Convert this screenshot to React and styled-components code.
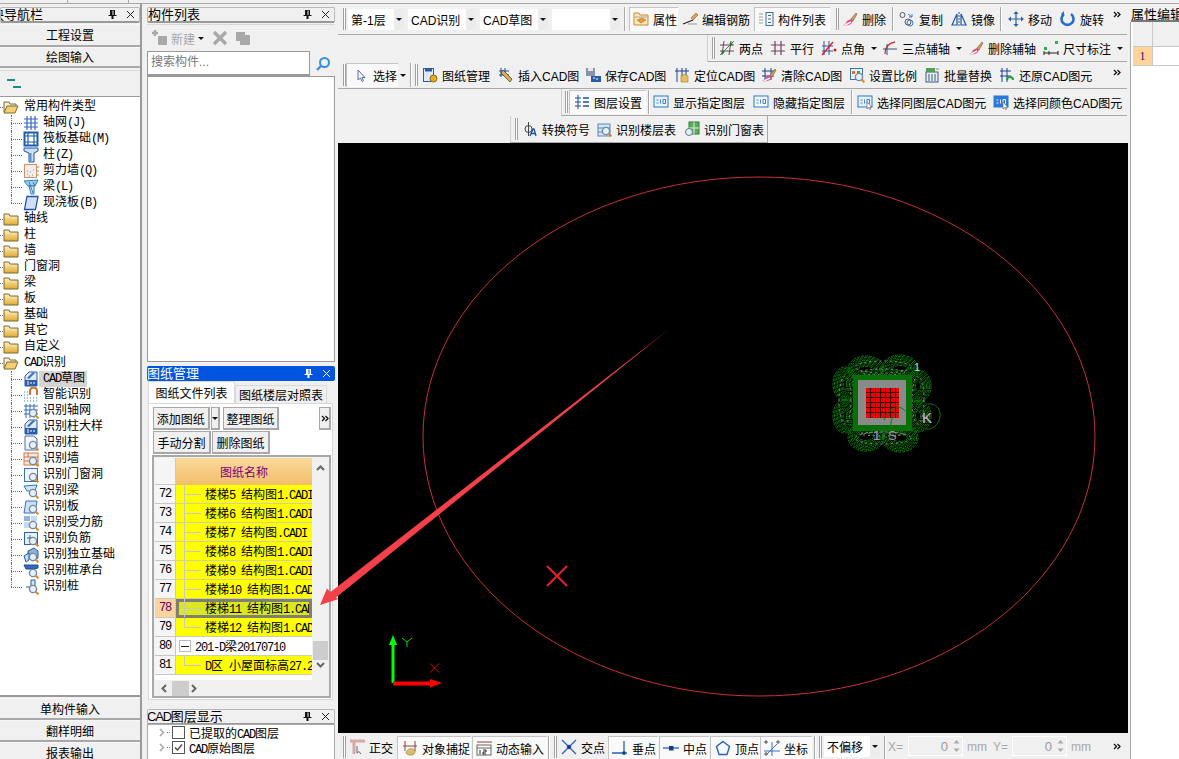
import React from "react";
import styled, { createGlobalStyle } from "styled-components";

const SANS = '"Liberation Sans", "Noto Sans CJK SC", sans-serif';
const MONO = '"Liberation Mono", "Noto Sans CJK SC", monospace';

const GlobalStyle = createGlobalStyle`
  html, body { margin: 0; padding: 0; overflow: hidden; background: #f0f0f0; }
  * { box-sizing: border-box; }
`;

const lens = (
  <g>
    <circle cx="10" cy="10" r="3.6" fill="#e4f2ff" stroke="#76899c" strokeWidth="1.4" />
    <path d="M12.8 12.8l2.6 2.6" stroke="#d88a2a" strokeWidth="2" />
  </g>
);
const cadDoc = (
  <g>
    <path d="M2 5l4-4h8v14H2z" fill="#dfeaf8" stroke="#2a5caa" />
    <path d="M4 7l6-6 2 1-6 6z" fill="#3a70c0" />
    <rect x="2" y="9" width="12" height="6" fill="#2a5caa" />
    <path d="M4 11h2M4 13h2M8 11v2M11 11v2" stroke="#fff" />
  </g>
);
const brush = (
  <g>
    <path d="M9 8l5-6 1 1-4 7z" fill="#c9a060" stroke="#7a5a20" strokeWidth=".6" />
    <path d="M1 14c2 0 3-2 4-4l4-2 2 2-2 3c-2 1-5 2-8 1z" fill="#d94a80" />
    <path d="M3 14l6-3" stroke="#f5f5f5" strokeWidth="1.4" />
  </g>
);
const cadLabel = (fill, text) => (
  <g>
    <rect x="1" y="2" width="14" height="11" fill={fill} stroke="#2a78c8" />
    <path d="M3.5 6h2M3.5 9h2M7.5 5.5v4M10 5.5h2.5v4H10z" stroke={text} fill="none" strokeWidth=".9" />
  </g>
);
const cursor = <path d="M10 8v7l1.6-1.4 1 2 1-.5-1-2H14.800z" fill="#fff" stroke="#666" strokeWidth=".7" />;

const glyphs = {
  folder: (
    <g>
      <path d="M1 3h5l1 2h8v9H1z" fill="url(#fold)" stroke="#7a6a30" />
    </g>
  ),
  folderOpen: (
    <g>
      <path d="M1 13V3h5l1 2h6v2" fill="#f5f0d8" stroke="#7a6a30" />
      <path d="M1 14l3-7h11l-3 7z" fill="#f6cf72" stroke="#7a6a30" />
    </g>
  ),
  grid: <path d="M4 1v14M8 1v14M12 1v14M1 4h14M1 8h14M1 12h14" stroke="#3568c0" strokeWidth="1.2" fill="none" />,
  raft: (
    <g fill="none" stroke="#1c5fa8">
      <rect x="1.500" y="1.500" width="13" height="13" strokeWidth="2" />
      <path d="M5 2v12M11 2v12M2 5h12M2 11h12" strokeWidth="1.2" />
    </g>
  ),
  column: (
    <g>
      <path d="M1 1h14v3l-4 2v9H6V6L1 4z" fill="#cfe0f5" stroke="#1f55a8" />
      <path d="M6.500 6h2v8h-2z" fill="#5a8ed0" />
    </g>
  ),
  wall: (
    <g>
      <rect x="1.500" y="1.500" width="12" height="13" fill="#f4eeea" stroke="#d09070" />
      <path d="M4 11h1M7 9h1M9 12h1M6 13h1M10 7h1M4 8h1" stroke="#888" strokeWidth="1.200" />
      <path d="M14 4h2M14 8h2M14 12h2" stroke="#e07020" />
    </g>
  ),
  beam: (
    <g>
      <path d="M1 2l14-1-3 6H5z" fill="#9fd0ee" stroke="#2b7ac0" />
      <path d="M6 7h5v8H8z" fill="#d5e9f7" stroke="#2b7ac0" />
      <path d="M6 3l4 11M10 3l2 4" stroke="#2b7ac0" />
    </g>
  ),
  slab: <path d="M4 1.500h11L12.500 14.500H1.500z" fill="#cfe0f8" stroke="#1f55b0" strokeWidth="1.300" />,
  cad: cadDoc,
  magnet: (
    <g>
      <path d="M7 8V4a3.500 3.500 0 0 1 7 0v4" fill="none" stroke="#d07030" strokeWidth="2" />
      <path d="M1 5h1M4 5h1M1 8h1M4 8h1M1 11h1M4 11h1M7 11h1M10 11h1M13 11h1M1 14h1M4 14h1M7 14h1M10 14h1M13 14h1" stroke="#3a78c8" />
    </g>
  ),
  rGrid: <g><path d="M3 1v14M7 1v14M11 1v14M1 3h14M1 7h14M1 11h14" stroke="#3568c0" fill="none" />{lens}</g>,
  rCad: cadDoc,
  rCol: <g><path d="M2 1h9l3 3v11H2z" fill="#f2f6fc" stroke="#4a6fb0" />{lens}</g>,
  rWall: <g><rect x="1" y="2" width="14" height="12" fill="#f6e8dc" stroke="#d07a50" /><path d="M1 6h14M1 10h14M5 2v4M10 6v4" stroke="#d07a50" />{lens}</g>,
  rDoor: <g><rect x="1.500" y="1.500" width="13" height="13" fill="#f2f6fc" stroke="#3a70c0" />{lens}</g>,
  rBeam: <g><path d="M1 3l13-1-2 6H4z" fill="#cfe5f7" stroke="#2b7ac0" />{lens}</g>,
  rSlab: <g><path d="M3 2h11l-2 12H1z" fill="#cfe0f8" stroke="#3a70c0" />{lens}</g>,
  rBar: <g><rect x="1" y="1" width="6" height="5" fill="#8fb4dd" /><rect x="8" y="1" width="6" height="5" fill="#c7d9ee" /><rect x="1" y="7" width="6" height="6" fill="#c7d9ee" />{lens}</g>,
  rNeg: <g><rect x="1.500" y="1.500" width="13" height="12" fill="#e9f1fb" stroke="#2a60b0" /><path d="M4 7h7M7 4v7" stroke="#2a60b0" />{lens}</g>,
  rFound: <g><path d="M5 4l6-3 4 3v7l-5 3-5-3z" fill="#8fb0dc" stroke="#2a5caa" /><path d="M1 9l5-3v7l-3 2z" fill="#c5d8f0" stroke="#2a5caa" />{lens}</g>,
  rCap: <g><path d="M1 2h14v3l-4 1H3z" fill="#2f6cbc" stroke="#1d4a90" /><path d="M9 6h3v6H9z" fill="#6a9ad8" />{lens}</g>,
  rPile: <g><path d="M8 1h4v11H8z" fill="#d5e3f5" stroke="#2a5caa" /><path d="M3 8h5" stroke="#2a5caa" />{lens}</g>,
  props: (
    <g>
      <path d="M1 2h5l1 2h8v10H1z" fill="#fbe7c0" stroke="#c88a30" />
      <path d="M2 6h13" stroke="#aaa" />
      <path d="M4 9l5-2 4 2-5 3z" fill="#e8a030" stroke="#a06010" strokeWidth=".5" />
    </g>
  ),
  rebar: <g><path d="M1 13l10-4" stroke="#222" strokeWidth="1.300" /><path d="M9 7l5-5 2 2-5 5z" fill="#d6a55a" stroke="#8a5a20" strokeWidth=".6" /><path d="M6 13h9" stroke="#999" /></g>,
  list: <g fill="none" stroke="#3b6aa0"><rect x="8" y="1.500" width="7" height="13" /><path d="M10 4.500h3M10 8h3M10 11.500h3" /><path d="M1 3h4M1 6h4M1 9h4M1 12h4" stroke="#999" /></g>,
  erase: brush,
  copy: <g fill="none" stroke="#556"><circle cx="3.500" cy="4" r="2.500" /><circle cx="9" cy="11" r="3" /><circle cx="11" cy="12" r="3" stroke="#3a78c8" /><path d="M9 3l4 3M13 3v3h-3" stroke="#3a78c8" /></g>,
  mirror: <g fill="none" stroke="#1f55a8"><path d="M8 1v14" strokeDasharray="2 1" /><path d="M6 3L1 14h5zM10 3l5 11h-5z" strokeWidth="1.200" /></g>,
  move: <g fill="#2a60a8"><path d="M8 0l2.500 3h-5zM8 16l-2.500-3h5zM0 8l3-2.500v5zM16 8l-3-2.500v5z" /><path d="M7.400 3h1.200v10H7.400zM3 7.400h10v1.200H3z" /></g>,
  rotate: <g><path d="M4 3a6 6 0 1 0 7 0" fill="none" stroke="#2a6cc8" strokeWidth="2.600" /><path d="M4 0v6l-3-3z" fill="#2a6cc8" /></g>,
  twoPoint: <g><path d="M5 1L3 15M12 1l-2 14M1 5h14M1 11h14" stroke="#704060" /><path d="M1 15L15 1" stroke="#20a030" /><circle cx="4" cy="12" r="1.500" fill="#208030" /><circle cx="12" cy="4" r="1.500" fill="#208030" /></g>,
  parallel: <path d="M5 1v14M11 1v14M1 5h14M1 11h14" stroke="#704060" strokeWidth="1.200" />,
  angle: <g><path d="M3 1v14M8 1v14M1 6h11M1 11h11" stroke="#3a50a0" /><path d="M1 15L12 2" stroke="#d02020" strokeWidth="1.300" /><circle cx="14" cy="10" r="1.500" fill="#d02020" /></g>,
  arc: <g><path d="M3 14C3 7 7 3 13 2" fill="none" stroke="#d03030" strokeWidth="1.300" /><path d="M5 4v11M1 9h14" stroke="#405070" /></g>,
  dim: <g><rect x="1" y="7" width="3" height="3" fill="#30b040" /><rect x="12" y="1" width="3" height="3" fill="#30b040" /><path d="M1 13h14M1 11v4M6 11v4M15 11v4" stroke="#222" /></g>,
  cursor: <path d="M5 3v10l2.500-2 1.500 3.500 1.500-.8-1.500-3.200h3z" fill="#f4f8ff" stroke="#5570a0" />,
  sheets: <g><rect x="1.500" y="1.500" width="10" height="13" fill="#dbeafc" stroke="#2a5caa" /><path d="M3 1.500h7v3H3z" fill="#2a5caa" /><circle cx="11.500" cy="11.500" r="3.500" fill="#e0b020" stroke="#8a6a10" /></g>,
  insert: <g><path d="M3 1v9M7 1v9M1 4h10M1 8h10" stroke="#1f4f9a" /><path d="M5 3l9 9-2 3-9-9z" fill="#dcae52" stroke="#333" strokeWidth=".7" /></g>,
  save: <g><path d="M1 1h9v8H1z" fill="#8a96a8" /><rect x="3" y="1" width="5" height="3" fill="#e5e9ef" /><rect x="6" y="9" width="10" height="6" fill="#2a5caa" /><path d="M8 11h2M12 11v2" stroke="#fff" /></g>,
  locate: <g><path d="M3 1v14M8 1v14M12 1v14M1 4h14" stroke="#1f3f90" /><path d="M7 15V8l2 1 1-2 2 1 2 1v6z" fill="#e8c060" stroke="#a08020" strokeWidth=".6" /></g>,
  clear: <g><path d="M4 1v12M10 1v12M1 4h12M1 9h12" stroke="#1f3f90" />{brush}</g>,
  scale: <g><rect x="1.500" y="1.500" width="12" height="11" fill="#e8f0f8" stroke="#4070a8" /><rect x="3" y="4" width="3" height="3" fill="#e07030" /><rect x="8" y="4" width="3" height="3" fill="#40a050" />{lens}</g>,
  replace: <g><rect x="2" y="5" width="12" height="10" fill="#e8f0f8" stroke="#405878" /><path d="M5 7v7M8 7v7M11 7v7" stroke="#405878" /><rect x="2" y="1" width="9" height="4" fill="#50a050" /><path d="M12 2h3" stroke="#888" /></g>,
  restore: <g><path d="M3 1v14M8 1v14M1 4h11M1 9h11" stroke="#1f3f90" /><path d="M8 13a3 3 0 0 1 6 0" fill="none" stroke="#20a040" strokeWidth="2" /></g>,
  layers: <g stroke="#1f4f9a" fill="none"><path d="M4 1v14M1 4h6M1 8h6M1 12h6" /><path d="M9 4h6M9 8h6M9 12h6" strokeWidth="1.300" /></g>,
  cadShow: cadLabel("#e8f3ff", "#2a78c8"),
  cadHide: cadLabel("#f4f9ff", "#2a78c8"),
  cadSel: <g>{cadLabel("#e8f3ff", "#2a78c8")}{cursor}</g>,
  cadSelFill: <g>{cadLabel("#2a78e0", "#ffffff")}{cursor}</g>,
  convert: <g><path d="M3 8a3.500 3.500 0 0 1 7 0 3.500 3.500 0 0 1-7 0zM6.500 1v14" fill="none" stroke="#444" /><path d="M8 15l3-7h1l2 7M9.500 12.500h3.500" stroke="#1f4fa8" strokeWidth="1.300" fill="none" /></g>,
  floors: <g><rect x="2" y="3" width="12" height="12" fill="#d3e4f7" stroke="#5a88c0" /><path d="M2 7h12M2 11h12" stroke="#5a88c0" />{lens}</g>,
  doors: <g><rect x="5" y="1" width="10" height="12" fill="#5cad5c" stroke="#2f7a30" /><path d="M10 1v12M5 7h10" stroke="#e0f0e0" /><circle cx="5" cy="11" r="3.500" fill="#e4ecf4" stroke="#687888" /></g>,
  ortho: <g><path d="M1 2h15M5 2v13" stroke="#d8a8a8" strokeWidth="3" /><path d="M8 7v7l2-1.500 2 2.500" fill="none" stroke="#667" /></g>,
  snap: <g><path d="M3 1v10M13 1v10M1 6h14" stroke="#904040" /><path d="M4 13c1-4 5-5 7-4s3 3 1 5-7 1-8-1z" fill="#d8c070" stroke="#907020" strokeWidth=".6" /></g>,
  dynamic: <g><path d="M1 2h15" stroke="#904040" /><rect x="1" y="5" width="14" height="10" fill="#fff" stroke="#666" /><path d="M1 8h14" stroke="#666" /><path d="M4 10v4M7 10h3v2H7v2h3" stroke="#222" fill="none" /></g>,
  cross: <g><path d="M1 1l14 14M15 1L1 15" stroke="#2a60c0" strokeWidth="1.300" /><path d="M5.500 8L8 5.500 10.500 8 8 10.500z" fill="#123c90" /></g>,
  perp: <g><path d="M0 13h15M12 1v14" stroke="#2a60c0" strokeWidth="1.300" /><rect x="10.500" y="11.500" width="3" height="3" fill="#123c90" /></g>,
  mid: <g><path d="M0 8h16" stroke="#2a60c0" strokeWidth="1.300" /><rect x="6" y="6" width="4.500" height="4.500" fill="#123c90" /></g>,
  vertex: <path d="M8 1.500L14.500 6.500 12 14.500H4L1.500 6.500z" fill="none" stroke="#2a60c0" strokeWidth="1.400" />,
  coord: <g><path d="M0 11h16M8 2v14M3 14L13 4" stroke="#3a70c8" /><path d="M1 1h2v2H1zM13 1h2v2h-2zM1 13h2v2H1z" fill="none" stroke="#555" /></g>,
  addGray: <g><rect x="6" y="6" width="9" height="9" fill="#a8a8a8" /><path d="M3 0v6M0 3h6" stroke="#a8a8a8" strokeWidth="2.400" /></g>,
  delGray: <path d="M2 2l12 12M14 2L2 14" stroke="#a8a8a8" strokeWidth="3.400" />,
  dupGray: <g fill="#a8a8a8"><rect x="1" y="2" width="9" height="9" /><rect x="5" y="5" width="10" height="10" /></g>,
  search: <g><circle cx="9.500" cy="6.500" r="4.500" fill="#e6f4ff" stroke="#3a90d8" strokeWidth="2" /><path d="M6 10l-4 4" stroke="#3a90d8" strokeWidth="2.400" /></g>,
  dashes: <g strokeWidth="2"><path d="M1 4h8M7 11h8" stroke="#1d8a84" /></g>,
};

const Glyph = ({ name, size = 16 }) => (
  <GlyphBox width={size} height={size} viewBox="0 0 16 16">
    {glyphs[name]}
  </GlyphBox>
);

const Chevrons = () => (
  <svg width="8" height="7" viewBox="0 0 8 7">
    <path d="M1 1l2.500 2.500L1 6M4.500 1L7 3.500 4.500 6" fill="none" stroke="#111" strokeWidth="1.300" />
  </svg>
);

const Pin = ({ color = "#111" }) => (
  <svg width="9" height="11" viewBox="0 0 9 11">
    <path d="M2 1h5v5h1.500v1h-3v3h-2V7h-3V6H2z" fill={color} />
    <path d="M5 1.500v4.500" stroke={color === "#111" ? "#f0f0f0" : "#0055e0"} />
  </svg>
);

const Cross = ({ color = "#222" }) => (
  <svg width="9" height="9" viewBox="0 0 9 9">
    <path d="M1 1l7 7M8 1L1 8" stroke={color} />
  </svg>
);

// half width latin runs, the way the bitmap font of the tree and grid sets them
const Half = styled.span`
  letter-spacing: -1.2px;
`;

const Mixed = ({ text }) =>
  text.split(/([\x20-\x7e]+)/).map((run, i) => (/^[\x20-\x7e]+$/.test(run) ? <Half key={i}>{run}</Half> : run));

const Page = styled.div`
  position: relative;
  width: 1179px;
  height: 759px;
  overflow: hidden;
  background: #f0f0f0;
  color: #000;
  font: 12px ${SANS};
  display: grid;
  grid-template-columns: 142px 196px 790px 1fr;
  grid-template-rows: 4px 755px;
`;

const HiddenDefs = styled.svg`
  position: absolute;
`;

const TopStrip = styled.div`
  grid-column: 1 / -1;
  border-bottom: 1px solid #a8a8a8;
  background: linear-gradient(90deg, #f0f0f0 67px, #a8a8a8 67px, #a8a8a8 68px, #f0f0f0 68px, #f0f0f0 128px, #a8a8a8 128px, #a8a8a8 129px, #f0f0f0 129px);
`;

const Column = styled.div`
  display: flex;
  flex-direction: column;
  min-height: 0;
  overflow: hidden;
  padding-top: ${(p) => p.$top || 0}px;
`;

const LeftColumn = styled(Column)`
  border-right: 2px solid #9a9a9a;
`;

const MiddleColumn = styled(Column)`
  padding-left: 5px;
  padding-right: 3px;
`;

const PanelHead = styled.div`
  flex: none;
  height: ${(p) => (p.$active ? 15 : 16)}px;
  display: flex;
  align-items: center;
  overflow: hidden;
  font-size: 13px;
  line-height: 15px;
  white-space: nowrap;
  padding-right: 4px;
  margin-top: ${(p) => p.$mt || 0}px;
  background: ${(p) => (p.$active ? "#0055e0" : "#f0f0f0")};
  color: ${(p) => (p.$active ? "#fff" : "#000")};
  border: ${(p) => (p.$active ? "none" : "1px solid #b8b8b8")};
  border-bottom-width: ${(p) => (p.$active ? 0 : 2)}px;
  border-bottom-color: #999;
  border-radius: 2px;
`;

const HeadTitle = styled.span`
  flex: 1;
  margin-left: ${(p) => p.$ml || 0}px;
`;

const HeadAction = styled.span`
  display: inline-flex;
  margin-left: ${(p) => p.$ml || 0}px;
`;

const SideButton = styled.div`
  flex: none;
  height: ${(p) => p.$h}px;
  margin-top: ${(p) => p.$mt || 0}px;
  display: flex;
  align-items: center;
  justify-content: center;
  background: #f0f0f0;
  border-top: 1px solid #f8f8f8;
  border-bottom: 2px solid #a8a8a8;
  font-family: ${MONO};
`;

const IconStrip = styled.div`
  flex: none;
  height: 27px;
  margin-top: 2px;
  padding-left: 6px;
  display: flex;
  align-items: center;
  border-top: 1px solid #d8d8d8;
  border-bottom: 1px solid #9a9a9a;
`;

const Tree = styled.div`
  flex: none;
  height: 600px;
  background: #fff;
  padding-top: 2px;
  font-family: ${MONO};
  border-bottom: 2px solid #9a9a9a;
`;

const TreeRow = styled.div`
  position: relative;
  height: 16px;
  display: flex;
  align-items: center;
  white-space: nowrap;
  padding-left: ${(p) => (p.$child ? 23 : 3)}px;
  &::before {
    content: "";
    position: absolute;
    left: ${(p) => (p.$child ? 11 : 0)}px;
    top: 8px;
    width: ${(p) => (p.$child ? 11 : 3)}px;
    border-top: 1px dotted #666;
  }
  &::after {
    content: "";
    display: ${(p) => (p.$child ? "block" : "none")};
    position: absolute;
    left: 11px;
    top: 0;
    height: ${(p) => (p.$last ? 8 : 16)}px;
    border-left: 1px dotted #666;
  }
`;

const TreeLabel = styled.span`
  margin-left: ${(p) => (p.$selected ? 0 : p.$child ? 4 : 5)}px;
  padding: ${(p) => (p.$selected ? "0 2px 0 4px" : "0")};
  background: ${(p) => (p.$selected ? "#d4d4d4" : "transparent")};
  line-height: 16px;
`;

const GlyphBox = styled.svg`
  flex: none;
  display: block;
`;

const ListTools = styled.div`
  flex: none;
  height: 27px;
  margin-top: 1px;
  display: flex;
  align-items: center;
  padding-left: 5px;
  border-top: 1px solid #d8d8d8;
  color: #a8a8a8;
`;

const DisabledTool = styled.span`
  display: inline-flex;
  align-items: center;
  margin-left: ${(p) => p.$ml || 0}px;
  gap: 3px;
`;

const SearchRow = styled.div`
  flex: none;
  height: 25px;
  display: flex;
  align-items: center;
`;

const SearchInput = styled.div`
  width: 163px;
  height: 25px;
  padding-left: 3px;
  line-height: 20px;
  background: #fff;
  border: 1px solid #999;
  border-bottom-width: 2px;
  color: #777;
`;

const SearchButton = styled.div`
  width: 25px;
  display: flex;
  justify-content: center;
`;

const ListBody = styled.div`
  flex: none;
  height: 286px;
  background: #fff;
  border: 1px solid #999;
`;

const TabRow = styled.div`
  flex: none;
  height: 22px;
  display: flex;
  align-items: flex-end;
  padding-left: 1px;
`;

const Tab = styled.div`
  height: ${(p) => (p.$active ? 22 : 18)}px;
  width: ${(p) => p.$w}px;
  display: flex;
  align-items: center;
  justify-content: center;
  background: ${(p) => (p.$active ? "#fff" : "#f0f0f0")};
  border: 1px solid #d9d9d9;
  border-bottom: none;
  white-space: nowrap;
`;

const TabPanel = styled.div`
  flex: none;
  height: 297px;
  margin-left: 1px;
  margin-right: 2px;
  padding: 3px 1px 0 4px;
  background: #fff;
  border: 1px solid #d9d9d9;
  display: flex;
  flex-direction: column;
`;

const ButtonRow = styled.div`
  flex: none;
  height: 24px;
  display: flex;
  gap: ${(p) => p.$gap || 1}px;
`;

const SheetButton = styled.div`
  width: ${(p) => p.$w}px;
  margin-left: ${(p) => p.$ml || 0}px;
  height: 23px;
  display: flex;
  align-items: center;
  justify-content: center;
  background: #f0f0f0;
  border: 1px solid #a8a8a8;
  border-width: 1px 2px 2px 1px;
  white-space: nowrap;
  align-self: flex-start;
`;

const ArrowDown = styled.span`
  display: inline-block;
  flex: none;
  width: 0;
  height: 0;
  margin-left: ${(p) => p.$ml || 0}px;
  border: 3px solid transparent;
  border-top: 3px solid #111;
  border-bottom: none;
`;

const SheetGrid = styled.div`
  margin-left: -1px;
  flex: 1;
  display: grid;
  grid-template-columns: 157px 16px;
  grid-template-rows: 222px 16px;
  background: #f0f0f0;
  border: 2px solid #a8a8a8;
  margin-bottom: 2px;
  padding: 1px 0 0 1px;
`;

const Rows = styled.div`
  overflow: hidden;
  background: #fff;
`;

const SheetRow = styled.div`
  display: grid;
  grid-template-columns: 21px 136px;
  height: ${(p) => p.$h || 19}px;
`;

const RowHead = styled.div`
  display: flex;
  align-items: center;
  justify-content: center;
  color: ${(p) => (p.$selected ? "#600080" : "#000")};
  background: ${(p) => (p.$selected ? "#fdd49a" : "#f5f5f5")};
  border-right: 1px solid #c8c8c8;
  border-bottom: 1px solid #c8c8c8;
  font-family: ${MONO};
`;

const NameHead = styled.div`
  display: flex;
  align-items: center;
  justify-content: center;
  color: #800080;
  background: linear-gradient(#fbd99b, #f1bf6a);
  font-family: ${MONO};
`;

const NameCell = styled.div`
  position: relative;
  overflow: hidden;
  display: flex;
  align-items: center;
  white-space: pre;
  font-family: ${MONO};
  padding-left: ${(p) => (p.$root ? 19 : 29)}px;
  background: ${(p) => (p.$selected ? "#dbe81e" : p.$root ? "#fff" : "#ffff00")};
  border-bottom: 1px solid #d0d0a0;
  outline: ${(p) => (p.$selected ? "3px solid #808070" : "none")};
  outline-offset: -3px;
  &::before {
    content: "";
    display: ${(p) => (p.$root ? "none" : "block")};
    position: absolute;
    left: 8px;
    top: 0;
    height: ${(p) => (p.$end ? 10 : 19)}px;
    border-left: 1px solid #c8c8c8;
  }
  &::after {
    content: "";
    display: ${(p) => (p.$root ? "none" : "block")};
    position: absolute;
    left: 9px;
    top: 9px;
    width: 16px;
    border-top: 1px solid #c8c8c8;
  }
`;

const MinusBox = styled.span`
  position: absolute;
  left: 3px;
  top: 3px;
  width: 12px;
  height: 12px;
  border: 1px solid #bbb;
  display: flex;
  align-items: center;
  justify-content: center;
  &::before {
    content: "";
    width: 8px;
    border-top: 1px solid #222;
  }
`;

const VScroll = styled.div`
  display: flex;
  flex-direction: column;
  align-items: center;
  padding-top: 6px;
`;

const Thumb = styled.div`
  flex: none;
  background: #cdcdcd;
  width: ${(p) => p.$w}px;
  height: ${(p) => p.$h}px;
  margin-top: ${(p) => p.$mt || 0}px;
  margin-left: ${(p) => p.$ml || 0}px;
`;

const HScroll = styled.div`
  display: flex;
  align-items: center;
  padding-left: 5px;
`;

const ScrollGlyph = styled.svg`
  flex: none;
  margin-top: ${(p) => p.$mt || 0}px;
  margin-left: ${(p) => p.$ml || 0}px;
`;

const LayerTree = styled.div`
  flex: none;
  height: 40px;
  margin-top: -1px;
  background: #fff;
  border: 1px solid #aaa;
  font-family: ${MONO};
`;

const LayerRow = styled.div`
  height: 15px;
  display: flex;
  align-items: center;
  padding-left: 9px;
  white-space: nowrap;
`;

const LayerDot = styled.span`
  width: 3px;
  margin: 0 2px 0 1px;
  border-top: 1px dotted #777;
`;

const CheckBox = styled.span`
  flex: none;
  width: 13px;
  height: 13px;
  margin-right: 4px;
  border: 1px solid #555;
  display: flex;
  align-items: center;
  justify-content: center;
`;

const Main = styled(Column)``;

const Bar = styled.div`
  flex: none;
  height: ${(p) => p.$h}px;
  margin-left: ${(p) => p.$from || 0}px;
  margin-right: 1px;
  width: ${(p) => (p.$w ? `${p.$w}px` : "auto")};
  display: flex;
  align-items: center;
  white-space: nowrap;
  border-bottom: 1px solid #a8a8a8;
  border-left: ${(p) => (p.$from ? "1px solid #d0d0d0" : "none")};
  border-right: ${(p) => (p.$w ? "1px solid #a8a8a8" : "none")};
`;

const StatusBar = styled(Bar)`
  align-items: flex-start;
  padding-top: 3px;
  border-bottom: none;
`;

const Grip = styled.span`
  flex: none;
  width: 3px;
  height: 22px;
  margin-left: ${(p) => p.$ml || 0}px;
  margin-right: -1px;
  border-left: 1px solid #a0a0a0;
  border-right: 1px solid #a0a0a0;
  background: #fff;
`;

const Sep = styled.span`
  flex: none;
  width: 2px;
  height: 24px;
  margin-left: ${(p) => p.$ml || 0}px;
  border-left: 1px solid #a8a8a8;
  border-right: 1px solid #fff;
`;

const Tool = styled.div`
  flex: none;
  width: ${(p) => p.$w}px;
  height: ${(p) => (p.$on ? 24 : 22)}px;
  margin-left: ${(p) => p.$ml || 0}px;
  padding-left: ${(p) => p.$pad || 0}px;
  display: flex;
  align-items: center;
  gap: 4px;
  background: ${(p) => (p.$on ? "#f9f9f9" : "transparent")};
  box-shadow: ${(p) => (p.$on ? "inset 1px 1px 0 #c4c4c4, inset -1px -1px 0 #fff" : "none")};
  overflow: hidden;
`;

const Combo = styled.div`
  flex: none;
  width: ${(p) => p.$w}px;
  height: 21px;
  margin-left: ${(p) => p.$ml || 0}px;
  padding-left: 3px;
  display: flex;
  align-items: center;
  background: #fff;
`;

const ComboCaret = styled.span`
  align-self: stretch;
  margin-left: auto;
  width: 10px;
  display: flex;
  align-items: center;
  justify-content: center;
  background: #ececec;
`;

const ChevronSlot = styled.span`
  display: flex;
  margin-left: auto;
  margin-right: 6px;
  align-self: flex-start;
  margin-top: 7px;
`;

const CoordLabel = styled.span`
  flex: none;
  width: ${(p) => p.$w}px;
  margin-left: ${(p) => p.$ml || 0}px;
  color: #a8a8a8;
  line-height: 22px;
`;

const SpinBox = styled.div`
  flex: none;
  width: 55px;
  height: 20px;
  display: flex;
  align-items: center;
  justify-content: flex-end;
  padding-right: 2px;
  gap: 5px;
  background: #f0f0f0;
  border: 1px solid #fff;
  color: #999;
  font-size: 13px;
`;

const Canvas = styled.div`
  flex: none;
  height: 590px;
  background: #000;
`;

const CanvasSvg = styled.svg`
  display: block;
`;

const CadText = styled.text`
  font: ${(p) => p.$size || 11}px ${SANS};
`;

const PropsPanel = styled.div`
  display: flex;
  flex-direction: column;
  padding-top: 3px;
  padding-left: 3px;
`;

const PropsHead = styled.div`
  height: 15px;
  font-size: 13px;
  line-height: 15px;
  white-space: nowrap;
  overflow: hidden;
  border-bottom: 2px solid #777;
`;

const PropsBody = styled.div`
  flex: 1;
  background: #fff;
  border-left: 1px solid #a8a8a8;
  margin-left: -1px;
  padding-left: 1px;
`;

const PropsHeadRow = styled.div`
  height: 25px;
  margin-left: 1px;
  display: grid;
  grid-template-columns: 20px 1fr;
  background: #f0f0f0;
  border-bottom: 1px solid #c8c8c8;
  & > span {
    border-right: 1px solid #c8c8c8;
  }
`;

const PropsRow = styled(PropsHeadRow)`
  height: 19px;
  background: #fff;
  & > span:first-child {
    background: #fdd49a;
    color: #600080;
    text-align: center;
    font: 12px/18px "Liberation Serif", serif;
  }
`;

const Overlay = styled.svg`
  position: absolute;
  left: 0;
  top: 0;
  pointer-events: none;
`;

const nav = [
  { name: "轴网(J)", icon: "grid" },
  { name: "筏板基础(M)", icon: "raft" },
  { name: "柱(Z)", icon: "column" },
  { name: "剪力墙(Q)", icon: "wall" },
  { name: "梁(L)", icon: "beam" },
  { name: "现浇板(B)", icon: "slab" },
];
const folders = ["轴线", "柱", "墙", "门窗洞", "梁", "板", "基础", "其它", "自定义"];
const cadItems = [
  { name: "CAD草图", icon: "cad", selected: true },
  { name: "智能识别", icon: "magnet" },
  { name: "识别轴网", icon: "rGrid" },
  { name: "识别柱大样", icon: "rCad" },
  { name: "识别柱", icon: "rCol" },
  { name: "识别墙", icon: "rWall" },
  { name: "识别门窗洞", icon: "rDoor" },
  { name: "识别梁", icon: "rBeam" },
  { name: "识别板", icon: "rSlab" },
  { name: "识别受力筋", icon: "rBar" },
  { name: "识别负筋", icon: "rNeg" },
  { name: "识别独立基础", icon: "rFound" },
  { name: "识别桩承台", icon: "rCap" },
  { name: "识别桩", icon: "rPile" },
];

const sheets = [
  { no: "72", name: "楼梯5 结构图1.CADI" },
  { no: "73", name: "楼梯6 结构图1.CADI" },
  { no: "74", name: "楼梯7 结构图.CADI" },
  { no: "75", name: "楼梯8 结构图1.CADI" },
  { no: "76", name: "楼梯9 结构图1.CADI" },
  { no: "77", name: "楼梯10 结构图1.CADI" },
  { no: "78", name: "楼梯11 结构图1.CADI", selected: true },
  { no: "79", name: "楼梯12 结构图1.CADI", end: true },
  { no: "80", name: "201-D梁20170710", root: true },
  { no: "81", name: "D区 小屋面标高27.200", end: true },
];

const row1 = [
  { grip: 5 },
  { combo: "第-1层", w: 56, ml: 3 },
  { combo: "CAD识别", w: 68, ml: 4 },
  { combo: "CAD草图", w: 68, ml: 4 },
  { combo: "", w: 68, ml: 4 },
  { sep: 4 },
  { icon: "props", label: "属性", w: 49, ml: 3, pad: 4, on: true },
  { icon: "rebar", label: "编辑钢筋", w: 71, ml: 4 },
  { icon: "list", label: "构件列表", w: 76, ml: 1, pad: 4, on: true },
  { grip: 6 },
  { icon: "erase", label: "删除", w: 50, ml: 4 },
  { sep: 0 },
  { icon: "copy", label: "复制", w: 52, ml: 5 },
  { icon: "mirror", label: "镜像", w: 49 },
  { sep: 0 },
  { icon: "move", label: "移动", w: 52, ml: 6 },
  { icon: "rotate", label: "旋转", w: 45 },
  { chevron: true },
];
const row2 = [
  { grip: 4 },
  { icon: "twoPoint", label: "两点", w: 51, ml: 5 },
  { icon: "parallel", label: "平行", w: 51 },
  { icon: "angle", label: "点角", w: 61, caret: true },
  { icon: "arc", label: "三点辅轴", w: 86, caret: true },
  { icon: "erase", label: "删除辅轴", w: 75 },
  { icon: "dim", label: "尺寸标注", w: 82, caret: true },
];
const row3 = [
  { grip: 5 },
  { icon: "cursor", label: "选择", w: 52, ml: 1, pad: 7, on: true },
  { arrow: 2 },
  { sep: 4 },
  { grip: 3 },
  { icon: "sheets", label: "图纸管理", w: 76, ml: 5 },
  { icon: "insert", label: "插入CAD图", w: 87 },
  { icon: "save", label: "保存CAD图", w: 89 },
  { icon: "locate", label: "定位CAD图", w: 87 },
  { icon: "clear", label: "清除CAD图", w: 88 },
  { icon: "scale", label: "设置比例", w: 75 },
  { icon: "replace", label: "批量替换", w: 75 },
  { icon: "restore", label: "还原CAD图元", w: 100 },
  { chevron: true },
];
const row4 = [
  { grip: 3 },
  { icon: "layers", label: "图层设置", w: 77, ml: 2, pad: 5, on: true },
  { sep: 2 },
  { icon: "cadShow", label: "显示指定图层", w: 100, ml: 3 },
  { icon: "cadHide", label: "隐藏指定图层", w: 98 },
  { sep: 0 },
  { icon: "cadSel", label: "选择同图层CAD图元", w: 136, ml: 4 },
  { icon: "cadSelFill", label: "选择同颜色CAD图元", w: 130 },
];
const row5 = [
  { grip: 4 },
  { icon: "convert", label: "转换符号", w: 74, ml: 5 },
  { icon: "floors", label: "识别楼层表", w: 88 },
  { icon: "doors", label: "识别门窗表", w: 82 },
];
const statusBar = [
  { grip: 5 },
  { icon: "ortho", label: "正交", w: 48, ml: 4 },
  { icon: "snap", label: "对象捕捉", w: 74, pad: 5, on: true },
  { icon: "dynamic", label: "动态输入", w: 75, ml: 1, pad: 4, on: true },
  { sep: 1 },
  { grip: 4 },
  { icon: "cross", label: "交点", w: 47, ml: 5 },
  { icon: "perp", label: "垂点", w: 50, pad: 4, on: true },
  { icon: "mid", label: "中点", w: 50, ml: 1, pad: 4, on: true },
  { icon: "vertex", label: "顶点", w: 50, ml: 1, pad: 5, on: true },
  { icon: "coord", label: "坐标", w: 52, pad: 4, on: true },
  { sep: 2 },
  { grip: 3 },
  { combo: "不偏移", w: 56, ml: 3 },
  { sep: 4 },
  { coord: "X=", w: 20, ml: 2 },
  { spin: true },
  { coord: "mm", w: 26, ml: 4 },
  { coord: "Y=", w: 19 },
  { spin: true },
  { coord: "mm", w: 26, ml: 4 },
  { chevron: true },
];

const ScrollArrow = ({ d, ml, mt }) => (
  <ScrollGlyph width="9" height="9" viewBox="0 0 9 9" $ml={ml} $mt={mt}>
    <path d={d} fill="none" stroke="#666" strokeWidth="2" />
  </ScrollGlyph>
);

const LayerArrow = () => (
  <ScrollGlyph width="9" height="9" viewBox="0 0 9 9">
    <path d="M3 1l3.500 3.500L3 8" fill="none" stroke="#aaa" strokeWidth="1.600" />
  </ScrollGlyph>
);

const Strip = ({ items }) =>
  items.map((it, i) => {
    if (it.grip !== undefined) return <Grip key={i} $ml={it.grip} />;
    if (it.sep !== undefined) return <Sep key={i} $ml={it.sep} />;
    if (it.arrow !== undefined) return <ArrowDown key={i} $ml={it.arrow} />;
    if (it.chevron) {
      return (
        <ChevronSlot key={i}>
          <Chevrons />
        </ChevronSlot>
      );
    }
    if (it.combo !== undefined) {
      return (
        <Combo key={i} $w={it.w} $ml={it.ml}>
          {it.combo}
          <ComboCaret>
            <ArrowDown />
          </ComboCaret>
        </Combo>
      );
    }
    if (it.coord) {
      return (
        <CoordLabel key={i} $w={it.w} $ml={it.ml}>
          {it.coord}
        </CoordLabel>
      );
    }
    if (it.spin) {
      return (
        <SpinBox key={i}>
          0
          <svg width="7" height="14" viewBox="0 0 7 14">
            <path d="M3.500 1L6.500 4.500H.500zM3.500 13L.500 9.500h6z" fill="#aaa" />
          </svg>
        </SpinBox>
      );
    }
    return (
      <Tool key={i} $w={it.w} $ml={it.ml} $pad={it.pad} $on={it.on}>
        <Glyph name={it.icon} />
        {it.label}
        {it.caret && <ArrowDown $ml={2} />}
      </Tool>
    );
  });

// concentric green rings of the drawing's outline clusters
const lobes = [
  { cx: 866, cy: 369, rx: 18, ry: 13 },
  { cx: 900, cy: 368, rx: 18, ry: 13 },
  { cx: 866, cy: 437, rx: 18, ry: 14 },
  { cx: 900, cy: 438, rx: 18, ry: 14 },
  { cx: 845, cy: 384, rx: 12, ry: 17 },
  { cx: 845, cy: 416, rx: 12, ry: 17 },
  { cx: 918, cy: 386, rx: 13, ry: 16 },
  { cx: 918, cy: 416, rx: 13, ry: 16 },
];
const rings = lobes.flatMap((l, i) =>
  [0, 1.5, 3, 4.5, 6, 7.5, 9, 10.5].map((d) => ({ key: `${i}-${d}`, cx: l.cx, cy: l.cy, rx: Math.max(l.rx - d, 1), ry: Math.max(l.ry - d, 1) }))
);
const gridX = [870.5, 875.5, 880.5, 885.5, 890.5, 895.5];
const gridY = [392.5, 397.5, 402.5, 407.5, 412.5];

const Drawing = () => (
  <CanvasSvg width="790" height="590" viewBox="338 143 790 590">
    <ellipse cx="759" cy="436.500" rx="336" ry="259.500" fill="none" stroke="#c8303a" />
    <path d="M547 566l20 20M567 566l-20 20" stroke="#e8202a" strokeWidth="2" />
    <path d="M391.500 683v-38h-2.500l4-10 4 10h-2.500v38z" fill="#00ff00" />
    <path d="M393 681.500h37V679l12 4-12 4.500V685.500h-37z" fill="#ff0000" />
    <path d="M402 638l5 4 5-4M407 642v5" fill="none" stroke="#00e000" />
    <path d="M430 663.500l9 9M439 663.500l-9 9" stroke="#e00000" />
    <g fill="none" stroke="#0c7c0c" strokeDasharray="3 1">
      {rings.map((r) => (
        <ellipse key={r.key} cx={r.cx} cy={r.cy} rx={r.rx} ry={r.ry} />
      ))}
    </g>
    <path d="M928 404c8-1 13 5 12 13s-8 13-14 12" fill="none" stroke="#0c7c0c" />
    <g fill="none" stroke="#8f8f8f" strokeDasharray="2 3">
      <ellipse cx="883" cy="367" rx="28" ry="6" />
      <ellipse cx="883" cy="372" rx="22" ry="3" />
      <ellipse cx="883" cy="438" rx="28" ry="6" />
      <ellipse cx="883" cy="434" rx="22" ry="2" />
      <ellipse cx="845" cy="400" rx="6" ry="24" />
      <ellipse cx="918" cy="400" rx="6" ry="24" />
    </g>
    <rect x="853" y="375" width="59" height="56" fill="#067006" />
    <rect x="858" y="380" width="48" height="45" fill="#8a8a8a" />
    <rect x="866" y="388" width="33" height="30" fill="#f00000" />
    <g stroke="#300" strokeWidth="1">
      {gridX.map((x) => (
        <path key={x} d={`M${x} 388v30`} />
      ))}
      {gridY.map((y) => (
        <path key={y} d={`M866 ${y}h33`} />
      ))}
    </g>
    <path d="M884 420c2-9 10-14 18-12l3 3M892 430c-3-8 0-14 6-16" fill="none" stroke="#0c7c0c" />
    <CadText x="922" y="423" fill="#cdb4e6" $size={15}>K</CadText>
    <CadText x="914" y="371" fill="#c8c8c8">1</CadText>
    <CadText x="873" y="440" fill="#d080d0" $size={13}>1</CadText>
    <CadText x="888" y="440" fill="#a890b0" $size={13}>S</CadText>
  </CanvasSvg>
);

export default function App() {
  return (
    <Page>
      <GlobalStyle />
      <HiddenDefs width="0" height="0">
        <defs>
          <linearGradient id="fold" x1="0" y1="0" x2="0" y2="1">
            <stop offset="0" stopColor="#fff3c4" />
            <stop offset="1" stopColor="#e2a92f" />
          </linearGradient>
        </defs>
      </HiddenDefs>
      <TopStrip />

      <LeftColumn $top={3}>
        <PanelHead>
          <HeadTitle $ml={-23}>模块导航栏</HeadTitle>
          <HeadAction><Pin /></HeadAction>
          <HeadAction $ml={9}><Cross /></HeadAction>
        </PanelHead>
        <SideButton $h={23} $mt={1}>工程设置</SideButton>
        <SideButton $h={21}>绘图输入</SideButton>
        <IconStrip>
          <Glyph name="dashes" />
        </IconStrip>
        <Tree>
          <TreeRow>
            <Glyph name="folderOpen" />
            <TreeLabel>常用构件类型</TreeLabel>
          </TreeRow>
          {nav.map((n, i) => (
            <TreeRow key={n.name} $child $last={i === nav.length - 1}>
              <Glyph name={n.icon} />
              <TreeLabel $child><Mixed text={n.name} /></TreeLabel>
            </TreeRow>
          ))}
          {folders.map((f) => (
            <TreeRow key={f}>
              <Glyph name="folder" />
              <TreeLabel>{f}</TreeLabel>
            </TreeRow>
          ))}
          <TreeRow>
            <Glyph name="folderOpen" />
            <TreeLabel><Mixed text="CAD识别" /></TreeLabel>
          </TreeRow>
          {cadItems.map((n, i) => (
            <TreeRow key={n.name} $child $last={i === cadItems.length - 1}>
              <Glyph name={n.icon} />
              <TreeLabel $child $selected={n.selected}><Mixed text={n.name} /></TreeLabel>
            </TreeRow>
          ))}
        </Tree>
        <SideButton $h={22} $mt={1}>单构件输入</SideButton>
        <SideButton $h={22}>翻样明细</SideButton>
        <SideButton $h={22}>报表输出</SideButton>
      </LeftColumn>

      <MiddleColumn $top={3}>
        <PanelHead>
          <HeadTitle>构件列表</HeadTitle>
          <HeadAction><Pin /></HeadAction>
          <HeadAction $ml={9}><Cross /></HeadAction>
        </PanelHead>
        <ListTools>
          <Glyph name="addGray" />
          <DisabledTool $ml={3}>新建<ArrowDown /></DisabledTool>
          <DisabledTool $ml={8}><Glyph name="delGray" /></DisabledTool>
          <DisabledTool $ml={7}><Glyph name="dupGray" /></DisabledTool>
        </ListTools>
        <SearchRow>
          <SearchInput>搜索构件...</SearchInput>
          <SearchButton><Glyph name="search" /></SearchButton>
        </SearchRow>
        <ListBody />
        <PanelHead $active $mt={4}>
          <HeadTitle>图纸管理</HeadTitle>
          <HeadAction><Pin color="#fff" /></HeadAction>
          <HeadAction $ml={9}><Cross color="#fff" /></HeadAction>
        </PanelHead>
        <TabRow>
          <Tab $active $w={87}>图纸文件列表</Tab>
          <Tab $w={92}>图纸楼层对照表</Tab>
        </TabRow>
        <TabPanel>
          <ButtonRow $gap={0}>
            <SheetButton $w={58}>添加图纸</SheetButton>
            <SheetButton $w={9}><ArrowDown /></SheetButton>
            <SheetButton $w={58} $ml={2}>整理图纸</SheetButton>
            <SheetButton $w={12} $ml={39}><Chevrons /></SheetButton>
          </ButtonRow>
          <ButtonRow $gap={0}>
            <SheetButton $w={58}>手动分割</SheetButton>
            <SheetButton $w={58}>删除图纸</SheetButton>
          </ButtonRow>
          <SheetGrid>
            <Rows>
              <SheetRow $h={27}>
                <RowHead />
                <NameHead>图纸名称</NameHead>
              </SheetRow>
              {sheets.map((s) => (
                <SheetRow key={s.no}>
                  <RowHead $selected={s.selected}><Mixed text={s.no} /></RowHead>
                  <NameCell $selected={s.selected} $root={s.root} $end={s.end}>
                    {s.root && <MinusBox />}
                    <span><Mixed text={s.name} /></span>
                  </NameCell>
                </SheetRow>
              ))}
            </Rows>
            <VScroll>
              <ScrollArrow d="M1 6l3.500-3.500L8 6" />
              <Thumb $w={15} $h={19} $mt={168} />
              <ScrollArrow d="M1 3l3.500 3.500L8 3" $mt={6} />
            </VScroll>
            <HScroll>
              <ScrollArrow d="M6 1L2.500 4.500 6 8" />
              <Thumb $w={17} $h={15} $ml={3} />
              <ScrollArrow d="M3 1l3.500 3.500L3 8" $ml={112} />
            </HScroll>
          </SheetGrid>
        </TabPanel>
        <PanelHead $mt={9}>
          <HeadTitle $ml={-1}><Mixed text="CAD" />图层显示</HeadTitle>
          <HeadAction><Pin /></HeadAction>
          <HeadAction $ml={9}><Cross /></HeadAction>
        </PanelHead>
        <LayerTree>
          <LayerRow>
            <LayerArrow />
            <LayerDot />
            <CheckBox />
            <span><Mixed text="已提取的CAD图层" /></span>
          </LayerRow>
          <LayerRow>
            <LayerArrow />
            <LayerDot />
            <CheckBox>
              <svg width="11" height="11" viewBox="0 0 11 11">
                <path d="M2 5.500l2.500 2.500L9 2.500" fill="none" stroke="#444" strokeWidth="1.300" />
              </svg>
            </CheckBox>
            <span><Mixed text="CAD原始图层" /></span>
          </LayerRow>
        </LayerTree>
      </MiddleColumn>

      <Main>
        <Bar $h={31}><Strip items={row1} /></Bar>
        <Bar $h={27} $from={369}><Strip items={row2} /></Bar>
        <Bar $h={27}><Strip items={row3} /></Bar>
        <Bar $h={27} $from={223}><Strip items={row4} /></Bar>
        <Bar $h={27} $from={172} $w={258}><Strip items={row5} /></Bar>
        <Canvas><Drawing /></Canvas>
        <StatusBar $h={26}><Strip items={statusBar} /></StatusBar>
      </Main>

      <PropsPanel>
        <PropsHead>属性编辑器</PropsHead>
        <PropsBody>
          <PropsHeadRow><span /><span /></PropsHeadRow>
          <PropsRow><span>1</span><span /></PropsRow>
        </PropsBody>
      </PropsPanel>

      <Overlay width="1179" height="759" viewBox="0 0 1179 759">
        <path d="M668 330L336 597.500 338.500 599 320 605 327 588.500 330.500 592z" fill="#f5404a" />
      </Overlay>
    </Page>
  );
}
